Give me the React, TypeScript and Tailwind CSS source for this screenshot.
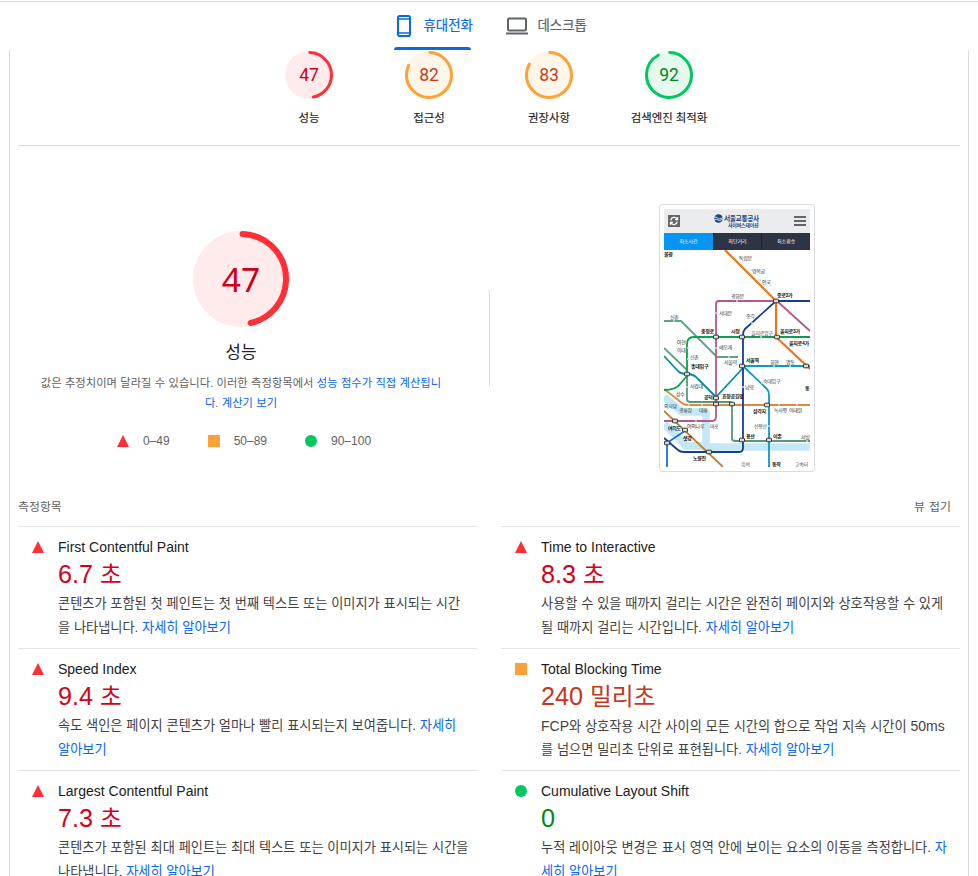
import React from "react";

type Level = "fail" | "average" | "pass";

const palette = {
  fail: { ring: "#ff2e37", fill: "#ffebec", text: "#cc0018" },
  average: { ring: "#ffa038", fill: "#fff6ea", text: "#c63d1b" },
  pass: { ring: "#00c75e", fill: "#e5f9ee", text: "#008715" },
};

const valueColor: Record<Level, string> = {
  fail: "text-[#d0021b]",
  average: "text-[#c7361b]",
  pass: "text-[#018718]",
};

function Gauge({ score, level, size, stroke, children }: { score: number; level: Level; size: number; stroke: number; children: React.ReactNode }) {
  const r = (size - stroke) / 2;
  const c = 2 * Math.PI * r;
  const p = palette[level];
  return (
    <div className="grid place-items-center">
      <svg className="col-start-1 row-start-1" width={size} height={size}>
        <circle cx={size / 2} cy={size / 2} r={size / 2} fill={p.fill} />
        <circle
          cx={size / 2}
          cy={size / 2}
          r={r}
          fill="none"
          stroke={p.ring}
          strokeWidth={stroke}
          strokeLinecap="round"
          strokeDasharray={`${(score / 100) * c - stroke / 2} ${c}`}
          transform={`rotate(${-90 + (stroke / 2 / r) * 30} ${size / 2} ${size / 2})`}
        />
      </svg>
      <span className="col-start-1 row-start-1" style={{ color: p.text }}>{children}</span>
    </div>
  );
}

function Mark({ level }: { level: Level }) {
  return (
    <svg className="shrink-0" width="12" height="12" viewBox="0 0 12 12">
      {level === "fail" && <path d="M6 0 12 12H0Z" fill="#ff2e37" />}
      {level === "average" && <path d="M0 0H12V12H0Z" fill="#ffa038" />}
      {level === "pass" && <circle cx="6" cy="6" r="6" fill="#00c75e" />}
    </svg>
  );
}

const categories: { score: number; level: Level; label: string }[] = [
  { score: 47, level: "fail", label: "성능" },
  { score: 82, level: "average", label: "접근성" },
  { score: 83, level: "average", label: "권장사항" },
  { score: 92, level: "pass", label: "검색엔진 최적화" },
];

type MetricData = { level: Level; title: string; value: string; unit?: string; lines: [string, string][] };

const left: MetricData[] = [
  { level: "fail", title: "First Contentful Paint", value: "6.7", unit: "초", lines: [["콘텐츠가 포함된 첫 페인트는 첫 번째 텍스트 또는 이미지가 표시되는 시간", ""], ["을 나타냅니다. ", "자세히 알아보기"]] },
  { level: "fail", title: "Speed Index", value: "9.4", unit: "초", lines: [["속도 색인은 페이지 콘텐츠가 얼마나 빨리 표시되는지 보여줍니다. ", "자세히"], ["", "알아보기"]] },
  { level: "fail", title: "Largest Contentful Paint", value: "7.3", unit: "초", lines: [["콘텐츠가 포함된 최대 페인트는 최대 텍스트 또는 이미지가 표시되는 시간을", ""], ["나타냅니다. ", "자세히 알아보기"]] },
];

const right: MetricData[] = [
  { level: "fail", title: "Time to Interactive", value: "8.3", unit: "초", lines: [["사용할 수 있을 때까지 걸리는 시간은 완전히 페이지와 상호작용할 수 있게", ""], ["될 때까지 걸리는 시간입니다. ", "자세히 알아보기"]] },
  { level: "average", title: "Total Blocking Time", value: "240", unit: "밀리초", lines: [["FCP와 상호작용 시간 사이의 모든 시간의 합으로 작업 지속 시간이 50ms", ""], ["를 넘으면 밀리초 단위로 표현됩니다. ", "자세히 알아보기"]] },
  { level: "pass", title: "Cumulative Layout Shift", value: "0", lines: [["누적 레이아웃 변경은 표시 영역 안에 보이는 요소의 이동을 측정합니다. ", "자"], ["", "세히 알아보기"]] },
];

function Latin({ text }: { text: string }) {
  return (
    <>
      {text.split(/([A-Za-z0-9]+)/).map((part, i) => (i % 2 ? <span key={i} className="text-sm leading-6">{part}</span> : part))}
    </>
  );
}

function Metric({ m }: { m: MetricData }) {
  return (
    <div className="flex h-[122px] gap-[14px] border-t border-[#e3e3e3] pl-[14px] pt-[10px]">
      <div className="pt-1"><Mark level={m.level} /></div>
      <div className="whitespace-nowrap">
        <div className="h-5 text-sm leading-5 text-[#212121]">{m.title}</div>
        <div className={`flex h-[35px] items-baseline text-[25.2px] leading-[34px] ${valueColor[m.level]}`}>
          <span>{m.value}</span>
          {m.unit && <span className="ml-[7px] text-[23.7px]">{m.unit}</span>}
        </div>
        {m.lines.map(([text, link], i) => (
          <p key={i} className="h-6 whitespace-pre text-[13.2px] leading-6 text-[#424242] [word-spacing:0.15px]">
            <Latin text={text} />
            <a className="text-[#0766f5]">{link}</a>
          </p>
        ))}
      </div>
    </div>
  );
}

const labels: [string, number, number, boolean?][] = [
  ["불광", 664, 256, true], ["독립문", 739, 260], ["경복궁", 752, 273], ["안국", 762, 284],
  ["광화문", 731, 298], ["종로3가", 777, 297, true], ["서대문", 719, 315], ["종각", 746, 318],
  ["신촌", 670, 319], ["충정로", 701, 333, true], ["시청", 731, 333, true], ["을지로입구", 751, 335], ["을지로3가", 780, 333, true],
  ["아현", 677, 344], ["이대", 677, 352], ["애오개", 719, 349], ["을지로4가", 789, 345, true],
  ["서울역", 724, 364], ["서울역", 746, 362, true], ["회현", 770, 364], ["명동", 786, 364],
  ["신촌", 690, 359], ["홍대입구", 691, 368, true], ["서강대", 690, 388], ["남영", 745, 389], ["숙대입구", 763, 383],
  ["상수", 676, 396], ["공덕", 704, 399, true], ["효창공원앞", 722, 398, true], ["동", 805, 390, true],
  ["의사당", 664, 408], ["광흥창", 679, 412], ["대흥", 699, 412], ["삼각지", 753, 413, true], ["녹사평", 774, 412], ["이태원", 789, 412],
  ["여의도", 668, 430, true], ["여의나루", 687, 428], ["마포", 710, 428], ["신용산", 754, 428], ["샛강", 683, 440, true],
  ["용산", 746, 438, true], ["이촌", 773, 438, true], ["서빙", 801, 439], ["노량진", 693, 460, true], ["흑석", 741, 466], ["동작", 772, 466, true], ["고속터", 795, 466],
];

const stations: [number, number][] = [[776, 301], [716, 337], [742, 337], [777, 337], [742, 366], [687, 374], [716, 398], [716, 404], [732, 404], [767, 405], [675, 421], [685, 430], [667, 443], [709, 452], [742, 440], [769, 440], [806, 366]];
const stops: [number, number][] = [[740, 257], [752, 270], [760, 280], [737, 301], [716, 313], [752, 323], [674, 321], [761, 337], [688, 348], [716, 348], [688, 359], [729, 357], [774, 366], [790, 366], [687, 387], [743, 387], [762, 383], [689, 405], [702, 405], [779, 405], [797, 405], [696, 421], [769, 426], [807, 441]];

function SubwayMap() {
  return (
    <svg className="block" width="146" height="217" viewBox="664 250 146 217">
      <path d="M664 250h146v217H664z" fill="#fff" />
      <path d="M664 397 682 412H705Q706 412 706 414V447H810" fill="none" stroke="#c4e8f5" strokeWidth="7.5" />
      <path d="M664 424 675 434 686 446H708" fill="none" stroke="#c4e8f5" strokeWidth="8" />
      <g fill="none" strokeWidth="1.8" strokeLinejoin="round">
        <path d="M664 321H681L717 357H738M664 348 687 370" stroke="#609f89" />
        <path d="M687 374V399Q687 402 690 402H730Q732 402 732 405V438Q732 441 735 441H810" stroke="#57977a" />
        <path d="M664 389 682 403Q684 405 688 405H810" stroke="#dc8b38" />
        <path d="M664 411 723 467" stroke="#b6842a" />
        <path d="M664 356 678 371Q681 374 687 374 694 374 698 379L716 397 743 368" stroke="#068ba0" />
        <path d="M664 390Q676 390 680 384L687 376V344Q687 337 694 337H810" stroke="#07a24c" />
        <path d="M810 331 777 301H719Q716 301 716 304V417Q716 421 712 421H664" stroke="#b45691" />
        <path d="M810 301H776L745 329Q743 331 743 335V448Q743 452 739 452H684Q680 452 678 450L664 438" stroke="#113f96" />
        <path d="M725 250 776 301M776 301V337L810 369" stroke="#e9761e" strokeWidth="2.2" />
        <path d="M810 366H743L767 389Q769 391 769 395V467" stroke="#079bcd" />
        <path d="M686 430 667 443V467" stroke="#1674df" />
      </g>
      {stops.map(([x, y], i) => <circle key={i} cx={x} cy={y} r="0.9" fill="#fff" stroke="#888" strokeWidth="0.3" />)}
      {stations.map(([x, y], i) => <rect key={i} x={x - 2.5} y={y - 1.8} width="5" height="3.6" rx="0.7" fill="#d8dfcc" stroke="#333" strokeWidth="1" />)}
      {labels.map(([text, x, y, bold], i) => <text key={i} x={x} y={y} fontSize="5" letterSpacing="-0.3" fontWeight={bold ? 700 : 400} fill={bold ? "#111" : "#333"}>{text}</text>)}
    </svg>
  );
}

function PhonePreview() {
  return (
    <div className="h-[268px] w-[156px] overflow-hidden rounded-[3px] border border-[#dadce0] bg-white px-1 pt-1">
      <div className="flex h-[24px] items-center justify-between bg-[#ebecee] px-1">
        <svg width="12" height="12" viewBox="0 0 12 12">
          <path d="M0 0h12v12H0z" fill="#666" />
          <path d="M2.8 5.3A3.3 3.3 0 0 1 9 4.2M9.2 6.7A3.3 3.3 0 0 1 3 7.8M9.5 2.2v2.5H7M2.5 9.8V7.3H5" fill="none" stroke="#fff" strokeWidth="1.3" />
        </svg>
        <div className="flex gap-[1px] text-[#21457e]">
          <svg width="9" height="9" viewBox="0 0 9 9">
            <circle cx="4.5" cy="4.5" r="4.3" fill="#174889" />
            <path d="M0 4Q2 2 3.5 4T9 3.5M0 6Q3 4.5 4 6T9 5" fill="none" stroke="#ebecee" strokeWidth="0.9" />
          </svg>
          <div className="flex w-[36px] flex-col whitespace-nowrap">
            <span className="h-[8px] text-[6.7px] font-bold leading-[9px] tracking-[-0.35px]">서울교통공사</span>
            <span className="h-[7px] pl-1 text-[5px] font-bold leading-[7px] tracking-[-0.25px]">사이버스테이션</span>
          </div>
        </div>
        <svg width="12" height="12" viewBox="0 0 12 12"><path d="M0 2h12M0 6h12M0 10h12" stroke="#666" strokeWidth="2" /></svg>
      </div>
      <div className="grid h-[17px] grid-cols-3 text-center text-[5px] leading-[16px] text-white">
        <span className="bg-[#0695f3]">최소시간</span>
        <span className="border-l border-[#1d222d] bg-[#2d3445]">최단거리</span>
        <span className="border-l border-[#1d222d] bg-[#2d3445]">최소환승</span>
      </div>
      <SubwayMap />
    </div>
  );
}

export default function App() {
  return (
    <div className="h-[876px] w-[978px] overflow-hidden bg-white pt-px font-['Liberation_Sans','Noto_Sans_CJK_KR',sans-serif]">
      <header className="flex h-[49px] justify-center border-t border-[#d9dadc] pl-[6px] text-[13.4px]">
        <div className="flex w-[77px] flex-col justify-between whitespace-nowrap text-[#0a6be0]">
          <div className="flex h-12 items-center gap-[13px] pl-[3px]">
            <svg className="shrink-0" width="14" height="22" viewBox="0 0 14 22" fill="none" stroke="#0a6be0" strokeWidth="2">
              <rect x="1" y="1" width="12" height="20" rx="1.8" />
              <path d="M1 4h12M1 18h12" strokeWidth="1.6" />
            </svg>
            <span className="pt-px [-webkit-text-stroke:0.2px]">휴대전화</span>
          </div>
          <div className="-mt-1 h-[3px] shrink-0 rounded-t-[3px] bg-[#0a6be0]" />
        </div>
        <div className="ml-[35px] flex h-12 w-[85px] items-center gap-[10px] whitespace-nowrap text-[#5f6368]">
          <svg className="shrink-0" width="22" height="18" viewBox="0 0 22 18" fill="none" stroke="#5f6368" strokeWidth="2">
            <rect x="2" y="1.5" width="18" height="12" rx="1.2" />
            <path d="M0 16.5h22" />
          </svg>
          <span className="pt-px [-webkit-text-stroke:0.2px]">데스크톱</span>
        </div>
      </header>

      <main className="ml-[9px] h-[826px] w-[960px] border-x border-[#d9dadc] px-2">
        <section className="flex h-[96px] justify-center border-b border-[#dadada]">
          {categories.map((c) => (
            <div key={c.label} className="flex w-[120px] flex-col items-center pt-px">
              <Gauge score={c.score} level={c.level} size={48} stroke={3}>
                <b className="font-['Roboto',sans-serif] text-[17.5px] font-normal">{c.score}</b>
              </Gauge>
              <span className="mt-[10px] text-[11.4px] leading-[19px] text-[#212121] [-webkit-text-stroke:0.15px]">{c.label}</span>
            </div>
          ))}
        </section>

        <section className="flex h-[344px] items-start justify-between">
          <div className="flex w-[446px] flex-col items-center pt-[85px]">
            <Gauge score={47} level="fail" size={96} stroke={6}>
              <b className="font-['Noto_Sans',sans-serif] text-[33.6px] font-normal">47</b>
            </Gauge>
            <h2 className="mt-[11px] text-[17px] leading-[30px] text-[#212121]">성능</h2>
            <div className="mt-[5px] whitespace-nowrap text-center text-[11.3px] leading-5 text-[#616161] [word-spacing:0.2px]">
              <p>값은 추정치이며 달라질 수 있습니다. 이러한 측정항목에서 <a className="text-[#0766f5]">성능 점수가 직접 계산됩니</a></p>
              <p><a className="text-[#0766f5]">다</a>. <a className="text-[#0766f5]">계산기 보기</a></p>
            </div>
            <div className="mt-[18px] flex items-center pl-[6px] text-xs leading-5 text-[#616161]">
              <Mark level="fail" /><span className="ml-[14px]">0–49</span>
              <span className="w-[38px]" />
              <Mark level="average" /><span className="ml-[14px]">50–89</span>
              <span className="w-[38px]" />
              <Mark level="pass" /><span className="ml-[14px]">90–100</span>
            </div>
          </div>
          <div className="mt-[144px] h-24 w-px bg-[#dadce0]" />
          <div className="flex w-[446px] justify-center pt-[58px]"><PhonePreview /></div>
        </section>

        <section>
          <div className="flex h-9 items-center justify-between pr-[9px] text-[11.9px] text-[#616161]">
            <span>측정항목</span>
            <span className="[word-spacing:1px]">뷰 접기</span>
          </div>
          <div className="grid grid-cols-2 gap-x-6">
            <div>{left.map((m) => <Metric key={m.title} m={m} />)}</div>
            <div>{right.map((m) => <Metric key={m.title} m={m} />)}</div>
          </div>
        </section>
      </main>
    </div>
  );
}
